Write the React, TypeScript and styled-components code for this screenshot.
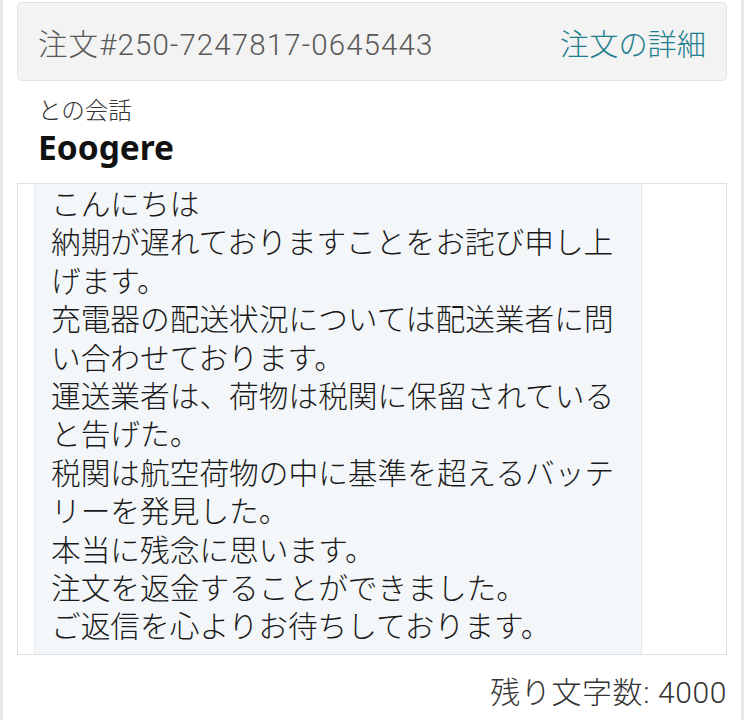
import React from "react";
import styled, { createGlobalStyle } from "styled-components";

const Global = createGlobalStyle`
  html, body { margin: 0; padding: 0; background: #fff; }
  body { font-family: "Roboto", "Noto Sans CJK JP", sans-serif; }
`;

const Page = styled.div`
  width: 744px;
  height: 720px;
  box-sizing: border-box;
  border-left: 3px solid #e8e8e8;
  border-right: 3px solid #e8e8e8;
  padding: 2px 14px 0 14px;
  display: flex;
  flex-direction: column;
  overflow: hidden;
`;

const OrderBar = styled.div`
  height: 79px;
  box-sizing: border-box;
  background: #f3f3f3;
  border: 1px solid #e4e4e4;
  border-radius: 5px;
  display: flex;
  align-items: center;
  justify-content: space-between;
  padding: 0 20px 0 20px;
  font-family: "Roboto", "Noto Sans CJK JP", sans-serif;
  font-weight: 300;
`;

const OrderNo = styled.span`
  color: #595959;
  font-size: 29.5px;
  letter-spacing: 1.1px;
`;

const DetailLink = styled.span`
  color: #1d7f8d;
  font-size: 29.2px;
`;

const Who = styled.div`
  margin: 12px 0 0 21px;
  font-size: 23.5px;
  line-height: 32px;
  color: #333;
  font-weight: 300;
  font-family: "Noto Sans CJK JP", sans-serif;
`;

const Name = styled.div`
  margin: 0 0 0 21px;
  font-size: 33.5px;
  line-height: 44px;
  font-weight: 700;
  color: #111;
  font-family: "Noto Sans", "Open Sans", sans-serif;
`;

const Box = styled.div`
  margin-top: 14px;
  height: 472px;
  box-sizing: border-box;
  border: 1px solid #e0e0e0;
  display: flex;
  background: #fff;
`;

const Gutter = styled.div`
  width: 16px;
  border-right: 1px solid #ececec;
  background: #fff;
`;

const Textarea = styled.div`
  width: 607px;
  background: #f4f7f9;
  border-right: 1px solid #e4e4e4;
  padding: 0 22px 0 16px;
  box-sizing: border-box;
  overflow: hidden;
  font-family: "Noto Sans CJK JP", sans-serif;
  font-weight: 300;
  font-size: 29.7px;
  line-height: 38.4px;
  color: #1a1a1a;
  white-space: pre-wrap;
  word-break: break-all;
`;

const Counter = styled.div`
  text-align: right;
  margin-top: 18px;
  font-size: 30px;
  line-height: 40px;
  letter-spacing: 0.6px;
  color: #333;
  font-weight: 300;
  font-family: "Roboto", "Noto Sans CJK JP", sans-serif;
`;

const message = `こんにちは
納期が遅れておりますことをお詫び申し上げます。
充電器の配送状況については配送業者に問い合わせております。
運送業者は、荷物は税関に保留されていると告げた。
税関は航空荷物の中に基準を超えるバッテリーを発見した。
本当に残念に思います。
注文を返金することができました。
ご返信を心よりお待ちしております。`;

export default function App() {
  return (
    <>
      <Global />
      <Page>
        <OrderBar>
          <OrderNo>注文#250-7247817-0645443</OrderNo>
          <DetailLink>注文の詳細</DetailLink>
        </OrderBar>
        <Who>との会話</Who>
        <Name>Eoogere</Name>
        <Box>
          <Gutter />
          <Textarea>{message}</Textarea>
        </Box>
        <Counter>残り文字数: 4000</Counter>
      </Page>
    </>
  );
}
